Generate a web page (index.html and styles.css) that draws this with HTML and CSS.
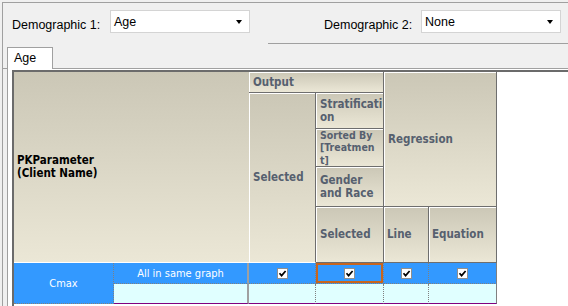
FILE: index.html
```html
<!DOCTYPE html>
<html lang="en">
<head>
    <meta charset="UTF-8">
    <title>Demographic Output</title>
    <link rel="stylesheet" href="styles.css">
</head>
<body>

    <div class="window">
        <div class="filters">
            <div class="filter-group">
                <label class="field-label" for="demo1">Demographic 1:</label>
                <div class="combo" id="demo1"><span>Age</span><span class="arrow"></span></div>
            </div>

            <div class="filter-group second">
                <label class="field-label" for="demo2">Demographic 2:</label>
                <div class="combo" id="demo2"><span>None</span><span class="arrow"></span></div>
            </div>
        </div>

        <div class="tabs">
            <div class="tab-gap"></div>
            <div class="tab">Age</div>
            <div class="tab-fill"></div>
        </div>

        <div class="pane">
            <div class="grid">
                <div class="sheet">
                    <!-- header -->
                    <div class="hcell pk"><span>PKParameter<br>(Client Name)</span></div>
                    <div class="hcell output">Output</div>
                    <div class="hcell sel1">Selected</div>
                    <div class="hcell strat"><span>Stratificati<br>on</span></div>
                    <div class="hcell sorted"><span>Sorted By<br>[Treatmen<br>t]</span></div>
                    <div class="hcell gender"><span>Gender<br>and Race</span></div>
                    <div class="hcell sel2">Selected</div>
                    <div class="hcell regr">Regression</div>
                    <div class="hcell line">Line</div>
                    <div class="hcell eq">Equation</div>

                    <!-- rows -->
                    <div class="dcell cmax blue">Cmax</div>
                    <div class="dcell graph blue">All in same graph</div>
                    <div class="dcell blue"><svg class="check" width="11" height="11" viewBox="0 0 11 11"><rect x="0.5" y="0.5" width="10" height="10" fill="#fff" stroke="#8f8f8f"/><path d="M2.5 5.2 L4.6 7.6 L8.6 3" fill="none" stroke="#000" stroke-width="1.7"/></svg></div>
                    <div class="dcell blue focus"><svg class="check" width="11" height="11" viewBox="0 0 11 11"><rect x="0.5" y="0.5" width="10" height="10" fill="#fff" stroke="#8f8f8f"/><path d="M2.5 5.2 L4.6 7.6 L8.6 3" fill="none" stroke="#000" stroke-width="1.7"/></svg></div>
                    <div class="dcell blue"><svg class="check" width="11" height="11" viewBox="0 0 11 11"><rect x="0.5" y="0.5" width="10" height="10" fill="#fff" stroke="#8f8f8f"/><path d="M2.5 5.2 L4.6 7.6 L8.6 3" fill="none" stroke="#000" stroke-width="1.7"/></svg></div>
                    <div class="dcell blue last"><svg class="check" width="11" height="11" viewBox="0 0 11 11"><rect x="0.5" y="0.5" width="10" height="10" fill="#fff" stroke="#8f8f8f"/><path d="M2.5 5.2 L4.6 7.6 L8.6 3" fill="none" stroke="#000" stroke-width="1.7"/></svg></div>

                    <div class="dcell graph cyan bottom"></div>
                    <div class="dcell cyan bottom"></div>
                    <div class="dcell cyan bottom"></div>
                    <div class="dcell cyan bottom"></div>
                    <div class="dcell cyan bottom last"></div>
                </div>
            </div>
        </div>
    </div>

</body>
</html>
```

FILE: styles.css
```css
* {
    box-sizing: border-box;
}
body {
    margin: 0;
    width: 568px;
    height: 306px;
    overflow: hidden;
    background-color: #f0f0f0;
    font-family: "Liberation Sans", Arial, sans-serif;
    font-size: 12.5px;
    color: #000;
}
.window {
    margin: 2px 0 0 2px;
    height: 304px;
    border-top: 1px solid #a0a0a0;
    border-left: 1px solid #a0a0a0;
    display: flex;
    flex-direction: column;
}
.filters {
    display: flex;
    height: 41px;
    padding-left: 9px;
}
.filter-group {
    display: flex;
    align-items: flex-start;
    padding-top: 7px;
}
.filter-group.second {
    flex: 1;
    margin-left: 18px;
    padding-left: 56px;
    border-bottom: 1px solid #a0a0a0;
}
.field-label {
    width: 98px;
    padding-top: 8px;
}
.second .field-label {
    width: 97px;
}
.combo {
    width: 140px;
    height: 23px;
    background: #fff;
    border: 1px solid #d4d4d4;
    display: flex;
    align-items: center;
    justify-content: space-between;
    padding: 0 7px 0 3px;
}
.arrow {
    width: 0;
    height: 0;
    border-left: 3.5px solid transparent;
    border-right: 3.5px solid transparent;
    border-top: 4px solid #000;
}
.tabs {
    display: flex;
    height: 25px;
}
.tab-gap {
    width: 4px;
    border-bottom: 1px solid #a0a0a0;
}
.tab {
    width: 46px;
    margin-top: 3px;
    padding: 3px 0 0 6px;
    background: #fff;
    border: 1px solid #a0a0a0;
    border-bottom: none;
}
.tab-fill {
    flex: 1;
    border-bottom: 1px solid #a0a0a0;
}
.pane {
    flex: 1;
    margin-left: 4px;
    padding: 1px 0 0 4px;
    background: #fff;
    border-left: 1px solid #a0a0a0;
}
.grid {
    height: 100%;
    background: #fff;
    border-top: 2px solid #6b6b6b;
    border-left: 2px solid #6b6b6b;
}
.sheet {
    display: grid;
    width: 483px;
    grid-template-columns: 100px 135px 67px 68px 45px 68px;
    grid-template-rows: 21px 36px 38px 40px 56px 21px 20px;
}
.hcell {
    display: flex;
    align-items: center;
    padding-left: 4px;
    overflow: hidden;
    white-space: nowrap;
    background: linear-gradient(#cbc7b6, #ebe7d6);
    border-right: 1px solid #6e6e6e;
    border-bottom: 1px solid #6e6e6e;
    box-shadow: inset 1px 1px 0 #fff;
    color: #56606f;
    font-family: "DejaVu Sans Condensed", "DejaVu Sans", sans-serif;
    font-stretch: condensed;
    font-weight: bold;
    font-size: 11.5px;
    line-height: 13px;
}
.pk {
    grid-column: 1 / 3;
    grid-row: 1 / 6;
    padding-left: 3px;
    color: #000;
    border-right: none;
    border-bottom: 1px solid #fff;
    box-shadow: none;
}
.output {
    grid-column: 3 / 5;
    grid-row: 1;
}
.sel1 {
    grid-column: 3;
    grid-row: 2 / 6;
    border-bottom-color: #fff;
}
.strat {
    grid-column: 4;
    grid-row: 2;
}
.sorted {
    grid-column: 4;
    grid-row: 3;
    font-size: 10.5px;
    line-height: 12.3px;
}
.gender {
    grid-column: 4;
    grid-row: 4;
}
.sel2 {
    grid-column: 4;
    grid-row: 5;
}
.regr {
    grid-column: 5 / 7;
    grid-row: 1 / 5;
}
.line {
    grid-column: 5;
    grid-row: 5;
    padding-left: 3px;
}
.eq {
    grid-column: 6;
    grid-row: 5;
    padding-left: 3px;
}
.dcell {
    display: flex;
    align-items: center;
    justify-content: center;
    border-right: 1px dotted #808080;
    border-bottom: 1px dotted #808080;
    font-family: "DejaVu Sans Condensed", "DejaVu Sans", sans-serif;
    font-stretch: condensed;
    font-size: 11px;
    white-space: nowrap;
}
.blue {
    background: #3399ff;
    color: #fff;
}
.cyan {
    background: #e0ffff;
}
.cmax {
    grid-row: 6 / 8;
}
.graph {
    border-right: 2px solid #a0a0a0;
}
.last {
    border-right: 1px solid #808080;
}
.bottom {
    border-bottom: 1px solid #800080;
}
.focus {
    box-shadow: inset 0 0 0 2px #c8651e;
}
.check {
    display: block;
}
```
